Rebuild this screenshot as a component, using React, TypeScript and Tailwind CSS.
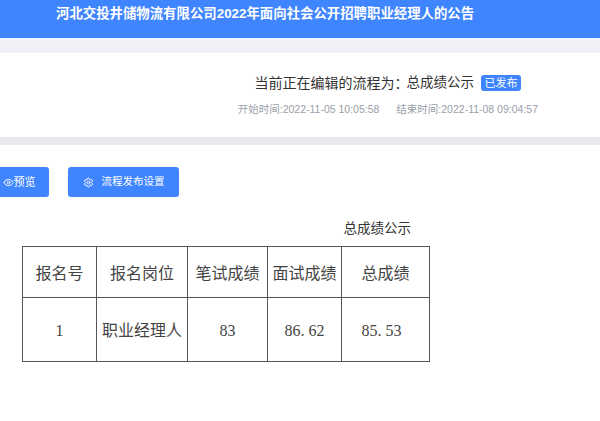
import React from 'react';
import { Eye, Settings } from 'lucide-react';

const sans = "font-['Liberation_Sans','Noto_Sans_CJK_SC',sans-serif]";

const Score: React.FC<{ value: string }> = ({ value }) => {
  const [whole, frac] = value.split('.');
  if (!frac) return <>{value}</>;
  return (
    <>
      {whole}
      <span className="pr-[4px]">.</span>
      {frac}
    </>
  );
};

const App: React.FC = () => {
  return (
    <div className={`w-[600px] h-[421px] overflow-hidden bg-white ${sans}`}>
      {/* Header */}
      <div className="h-[38px] bg-[#3f85ff] pl-[56px] pt-[5px] text-[13.4px] leading-[18px] font-bold text-white">
        河北交投井储物流有限公司2022年面向社会公开招聘职业经理人的公告
      </div>
      <div className="h-[15px] bg-gradient-to-b from-[#f2f4f9] to-[#eef0f5]"></div>

      {/* Flow info */}
      <div className="h-[84px] bg-white flex flex-col items-end pr-[62px] pt-[21px]">
        <div className="flex items-center pr-[17px] h-[18px] text-[14px] text-[#333333]">
          <span>当前正在编辑的流程为：</span>
          <span className="ml-[-2px] text-[13.5px]">总成绩公示</span>
          <span className="ml-[7px] w-[40px] h-[16px] rounded-[3px] bg-[#3f85ff] text-white text-[11px] leading-[16px] text-center">已发布</span>
        </div>
        <div className="flex gap-[17px] mt-[10px] text-[10.5px] leading-[14px] text-[#9a9ea8]">
          <span>开始时间:2022-11-05 10:05:58</span>
          <span>结束时间:2022-11-08 09:04:57</span>
        </div>
      </div>
      <div className="h-[8px] bg-[#e9eaef]"></div>

      {/* Actions */}
      <div className="flex gap-[19px] ml-[-11px] mt-[22px]">
        <button className="w-[60px] h-[30px] rounded-[3px] bg-[#3f85ff] text-white text-[11px] flex items-center justify-center">
          <Eye size={11} />
          <span>预览</span>
        </button>
        <button className="w-[111px] h-[30px] rounded-[3px] bg-[#3f85ff] text-white text-[10.5px] flex items-center justify-center gap-[8px]">
          <Settings size={11} />
          <span>流程发布设置</span>
        </button>
      </div>

      {/* Result table */}
      <div className="w-[411px] text-right text-[13.5px] leading-[16px] text-[#333333] mt-[24px]">总成绩公示</div>
      <table className="ml-[22px] mt-[9px] w-[407px] table-fixed border-collapse text-[16px] text-[#444444] font-['Liberation_Serif','Noto_Sans_CJK_SC',serif]">
        <colgroup>
          <col className="w-[74px]" />
          <col className="w-[91px]" />
          <col className="w-[80px]" />
          <col className="w-[74px]" />
          <col className="w-[88px]" />
        </colgroup>
        <tbody>
          <tr className="h-[51px]">
            {['报名号', '报名岗位', '笔试成绩', '面试成绩', '总成绩'].map((label) => (
              <td key={label} className="border border-[#555555] text-center p-0 pt-[3px] whitespace-nowrap">{label}</td>
            ))}
          </tr>
          <tr className="h-[64px]">
            {['1', '职业经理人', '83', '86.62'].map((value) => (
              <td key={value} className="border border-[#555555] text-center p-0 pt-[2px] whitespace-nowrap">
                <Score value={value} />
              </td>
            ))}
            <td className="border border-[#555555] text-center p-0 pt-[2px] pr-[8px] whitespace-nowrap">
              <Score value="85.53" />
            </td>
          </tr>
        </tbody>
      </table>
    </div>
  );
};

export default App;
